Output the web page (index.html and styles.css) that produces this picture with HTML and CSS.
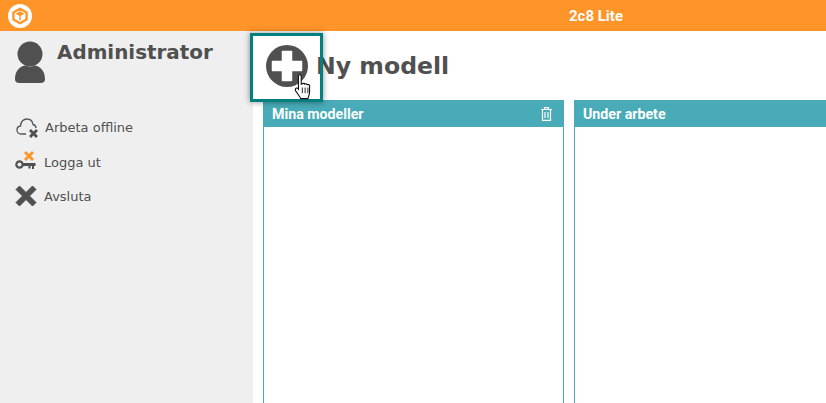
FILE: index.html
```html
<!DOCTYPE html>
<html lang="sv">
<head>
  <meta charset="UTF-8">
  <title>2c8 Lite</title>
  <link rel="stylesheet" href="styles.css">
</head>
<body>
  <div class="topbar">
    <svg class="logo" width="24" height="24" viewBox="0 0 24 24">
      <circle cx="12" cy="12" r="12" fill="#fff"/>
      <path d="M12 4.800 18.600 8.500v7L12 19.200 5.400 15.500v-7z" fill="#fff" stroke="#ff9428" stroke-width="2.400" stroke-linejoin="round"/>
      <path d="M12 7.300 16.500 9.800 12 12.300 7.500 9.800z" fill="#ff9428"/>
      <path d="M12 12.300v4" stroke="#ff9428" stroke-width="1.500"/>
    </svg>
    <span class="app-title">2c8 Lite</span>
  </div>
  <div class="layout">
    <div class="sidebar">
      <div class="user">
        <svg width="32" height="44" viewBox="0 0 32 44">
          <circle cx="16" cy="13" r="12.500" fill="#505050"/>
          <path d="M1 38c0-8 5-13 10-13.500 3 1.500 7 1.500 10 0C26 25 31 30 31 38c0 3-2 4-5 4H6c-3 0-5-1-5-4z" fill="#505050"/>
        </svg>
        <span class="user-name">Administrator</span>
      </div>
      <div class="menu">
        <div class="menu-item item-offline">
          <svg width="24" height="22" viewBox="0 0 24 22">
            <path d="M11 18H6C3.500 18 2 16.300 2 14c0-2.200 1.500-3.800 3.500-4C6 6 8.500 3 12 3c3.200 0 5.500 2.200 6 5.500 1.800.5 3 2 3 3.500" fill="none" stroke="#555" stroke-width="1.300"/>
            <path d="M14 15l2-2 2.500 2.500L21 13l2 2-2.500 2.500L23 20l-2 2-2.500-2.500L16 22l-2-2 2.500-2.500z" fill="#505050"/>
          </svg>
          <span>Arbeta offline</span>
        </div>
        <div class="menu-item">
          <svg width="24" height="22" viewBox="0 0 24 22">
            <path d="M9 2l2-2 3 3 3-3 2 2-3 3 3 3-2 2-3-3-3 3-2-2 3-3z" fill="#ff9428"/>
            <circle cx="4.500" cy="13.500" r="3.200" fill="none" stroke="#505050" stroke-width="2.200"/>
            <path d="M8 12h12.500v3H19v3h-2v-3h-1.500v2.500h-2V15H8z" fill="#505050"/>
          </svg>
          <span>Logga ut</span>
        </div>
        <div class="menu-item">
          <svg width="24" height="22" viewBox="0 0 24 22">
            <path d="M1 4.500 4.500 1l6.500 6.500L17.500 1 21 4.500 14.500 11 21 17.500 17.500 21 11 14.500 4.500 21 1 17.500 7.500 11z" fill="#505050" stroke="#505050" stroke-linejoin="round"/>
          </svg>
          <span>Avsluta</span>
        </div>
      </div>
    </div>
    <div class="main">
      <div class="new-model">
        <svg width="42" height="42" viewBox="0 0 42 42">
          <circle cx="21" cy="21" r="21" fill="#505050"/>
          <path d="M16.500 6.500h9v10h10v9h-10v10h-9v-10h-10v-9h10z" fill="#fff" stroke="#fff" stroke-linejoin="round" stroke-width="1.500"/>
        </svg>
        <h1>Ny modell</h1>
      </div>
      <div class="panels">
        <div class="panel">
          <div class="panel-head">
            <span>Mina modeller</span>
            <svg width="11" height="14" viewBox="0 0 11 14">
              <path d="M0 2.500h11M3.500 2.500V.7h4v1.800M1.500 2.500v10.800h8V2.500M4 5v6M7 5v6" fill="none" stroke="#fff" stroke-width="1.200"/>
            </svg>
          </div>
        </div>
        <div class="panel panel-wide">
          <div class="panel-head"><span>Under arbete</span></div>
        </div>
      </div>
      <div class="highlight"></div>
      <svg class="cursor" width="20" height="28" viewBox="0 0 18 25">
        <path d="M5 1.500c1 0 1.500.7 1.500 1.500v7l1-.3c.4-.8 1.900-.6 2.200.2.500-.5 1.900-.3 2.200.5.700-.4 2.100 0 2.100 1V17c0 2.500-.8 3.500-1.500 6H6c-1-2.500-2.500-4-4.500-7-.6-1-.4-2 .4-2.400.8-.4 1.500 0 2.100.8V3c0-.8.300-1.500 1-1.500z" fill="#fff" stroke="#111" stroke-width="1"/>
        <path d="M7.500 13v5M10 13v5M12.500 13v5" stroke="#111" stroke-width=".8"/>
      </svg>
    </div>
  </div>
</body>
</html>
```

FILE: styles.css
```css
html, body {
  height: 100%;
}
body {
  margin: 0;
  overflow: hidden;
  background: #fff;
  font-family: "DejaVu Sans", sans-serif;
  color: #505050;
}
.topbar {
  display: flex;
  align-items: center;
  height: 31px;
  padding-left: 8px;
  background: #ff9428;
}
.logo {
  flex: none;
}
.app-title {
  margin-left: 537px;
  font-family: Roboto, sans-serif;
  font-size: 15px;
  font-weight: 700;
  color: #fff;
}
.layout {
  display: flex;
  height: 372px;
}
.sidebar {
  flex: none;
  width: 253px;
  background: #efefef;
}
.user {
  display: flex;
  align-items: flex-start;
  padding: 10px 0 0 14px;
}
.user-name {
  margin: 1px 0 0 11px;
  font-size: 19.900px;
  font-weight: 700;
  line-height: 22px;
}
.menu {
  margin-top: 25px;
  padding-left: 15px;
}
.menu-item {
  display: flex;
  align-items: center;
  gap: 5px;
  box-sizing: border-box;
  height: 34.500px;
  font-size: 13px;
  color: #505050;
}
.menu-item:nth-child(2) {
  padding-top: 1px;
}
.item-offline {
  gap: 6px;
}
.main {
  position: relative;
  flex: 1;
  min-width: 0;
  padding-left: 10px;
}
.new-model {
  display: flex;
  align-items: center;
  gap: 8px;
  height: 69px;
  padding-left: 3px;
}
.new-model h1 {
  margin: 0;
  font-size: 23.600px;
  font-weight: 700;
  color: #505050;
}
.panels {
  display: flex;
  gap: 10px;
  overflow: hidden;
}
.panel {
  flex: none;
  width: 301px;
  height: 320px;
  box-sizing: border-box;
  border: 1px solid #48abb7;
  border-top: none;
}
.panel-wide {
  width: 320px;
}
.panel-head {
  display: flex;
  align-items: center;
  justify-content: space-between;
  height: 27px;
  margin: 0 -1px;
  padding: 0 12px 0 9px;
  background: #48abb7;
  font-family: Roboto, sans-serif;
  font-size: 14.200px;
  font-weight: 700;
  color: #fff;
}
.highlight {
  position: absolute;
  left: -3px;
  top: 2px;
  width: 67px;
  height: 63px;
  border: 3px solid #047f7f;
  box-shadow: 0 0 6px rgba(0, 0, 0, 0.45);
}
.cursor {
  position: absolute;
  left: 41px;
  top: 42px;
}
```
